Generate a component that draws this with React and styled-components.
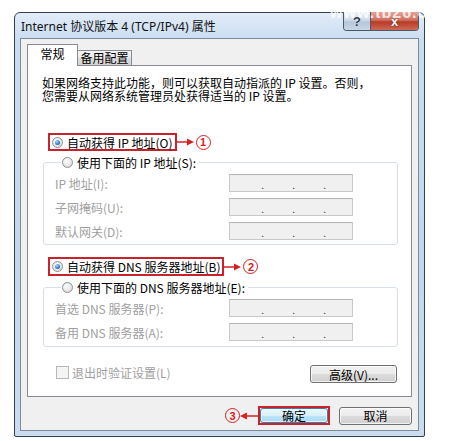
import React from "react";
import styled, { createGlobalStyle } from "styled-components";

const GlobalStyle = createGlobalStyle`
  body {
    margin: 0;
    background: #fff;
    font-family: "Noto Sans CJK SC", "Noto Sans", sans-serif;
    color: #000;
  }
`;

const Page = styled.div`
  position: relative;
  width: 450px;
  height: 441px;
  padding: 12px 0 0 14px;
  box-sizing: border-box;
  overflow: hidden;
`;

const Watermark = styled.div`
  position: absolute;
  top: 4px;
  left: 330px;
  font: bold 16px "Liberation Sans", sans-serif;
  letter-spacing: 1px;
  color: rgba(255, 255, 255, 0.8);
`;

const Window = styled.div`
  width: 411px;
  height: 425px;
  box-sizing: border-box;
  border: 1px solid #34404e;
  border-radius: 6px 6px 2px 2px;
  background: linear-gradient(#e2ecf8, #c9dcf1 28px, #c2d7ee 60%, #cbdcf0);
  display: flex;
  flex-direction: column;
  padding: 0 5px 5px;
`;

const TitleBar = styled.div`
  height: 25px;
  display: flex;
  align-items: center;
`;

const Title = styled.div`
  flex: 1;
  margin-left: 1px;
  font-family: "Noto Sans", "Noto Sans CJK SC", sans-serif;
  font-size: 12px;
  color: #111;
`;

const CaptionButtons = styled.div`
  align-self: flex-start;
  margin-top: -1px;
  display: flex;
  height: 18px;
  border: 1px solid #4a5868;
  border-top: none;
  border-radius: 0 0 4px 4px;
  overflow: hidden;
`;

const CaptionButton = styled.div`
  width: ${(p) => p.$w}px;
  display: flex;
  align-items: center;
  justify-content: center;
  font: bold 13px "Liberation Sans", sans-serif;
  color: ${(p) => (p.$close ? "#fff" : "#2b3948")};
  background: ${(p) =>
    p.$close
      ? "linear-gradient(#e6a497, #d0705f 45%, #b83a25 55%, #cc6a55)"
      : "linear-gradient(#e9f0f8, #cfdbe8 45%, #b6c7da 55%, #c8d6e6)"};
  border-right: ${(p) => (p.$close ? "none" : "1px solid #4a5868")};
  text-shadow: ${(p) => (p.$close ? "0 0 2px #6b1a10" : "0 0 1px #fff")};
`;

const Client = styled.div`
  flex: 1;
  border: 1px solid #7d8a98;
  background: #f0f0f0;
  padding: 5px 6px 0;
  display: flex;
  flex-direction: column;
`;

const TabStrip = styled.div`
  display: flex;
  align-items: flex-end;
  height: 22px;
  margin-bottom: -1px;
  position: relative;
  z-index: 1;
`;

const Tab = styled.div`
  box-sizing: border-box;
  width: ${(p) => p.$w}px;
  height: ${(p) => (p.$active ? 22 : 16)}px;
  border: 1px solid #898c95;
  border-bottom: ${(p) => (p.$active ? "none" : "1px solid #898c95")};
  border-left: ${(p) => (p.$active ? "1px solid #898c95" : "none")};
  background: ${(p) => (p.$active ? "#fff" : "linear-gradient(#f3f3f3, #ebebeb 50%, #dcdcdc 50%, #d4d4d4)")};
  font-size: 12px;
  line-height: 1;
  display: flex;
  align-items: center;
  justify-content: center;
  padding-bottom: ${(p) => (p.$active ? 3 : 0)}px;
`;

const Panel = styled.div`
  box-sizing: border-box;
  height: 332px;
  background: #fff;
  border: 1px solid #898c95;
  padding: 10px 13px 0 14px;
  display: flex;
  flex-direction: column;
`;

const Description = styled.p`
  margin: 0;
  font-size: 12px;
  line-height: 13px;
`;

const CalloutRow = styled.div`
  display: flex;
  align-items: center;
  margin-top: ${(p) => p.$mt}px;
  margin-left: 6px;
`;

const RedBox = styled.div`
  display: flex;
  align-items: center;
  height: ${(p) => p.$h || 18}px;
  box-sizing: border-box;
  border: 2px solid #c8232a;
  padding: 0 2px;
`;

const Radio = styled.span`
  width: 11px;
  height: 11px;
  box-sizing: border-box;
  border-radius: 50%;
  border: 1px solid #8e8f8f;
  background: radial-gradient(circle at 40% 35%, #fff, #dcdcdc 80%);
  display: flex;
  align-items: center;
  justify-content: center;
  flex: none;

  &::after {
    content: "";
    display: ${(p) => (p.$checked ? "block" : "none")};
    width: 5px;
    height: 5px;
    border-radius: 50%;
    background: radial-gradient(circle at 35% 30%, #9fdcff, #1e6fb8 70%, #134d88);
  }
`;

const OptionText = styled.span`
  font-size: 12px;
  margin-left: 4px;
  white-space: nowrap;
  color: ${(p) => (p.$disabled ? "#a0a0a0" : "#000")};
`;

const Group = styled.fieldset`
  margin: ${(p) => p.$mt}px 0 0 1px;
  padding: 0 0 ${(p) => p.$pb}px 11px;
  border: 1px solid #d5dfe5;
  border-radius: 3px;
  min-width: 0;
`;

const Legend = styled.legend`
  margin-left: 6px;
  padding: 0 3px 0 1px;
  height: 18px;
  display: flex;
  align-items: center;
`;

const FieldRow = styled.div`
  display: grid;
  grid-template-columns: 174px 124px;
  align-items: center;
  height: 24px;
`;

const FieldLabel = styled.span`
  font-size: 12px;
  color: #a0a0a0;
  white-space: nowrap;
`;

const IpBox = styled.div`
  box-sizing: border-box;
  height: 18px;
  padding-left: 3px;
  border: 1px solid #c9c9c9;
  border-top-color: #b5b5b5;
  background: #f0f0f0;
  display: grid;
  grid-template-columns: repeat(3, 31px);
  font-size: 10px;
  line-height: 1;
  color: #333;
`;

const IpDot = styled.span`
  text-align: right;
  padding-top: 5px;
`;

const BottomRow = styled.div`
  display: flex;
  align-items: flex-start;
  justify-content: space-between;
  margin-top: 18px;
  margin-right: 1px;
`;

const CheckLabel = styled.label`
  display: flex;
  align-items: center;
  margin-left: 14px;
  height: 14px;
  font-size: 12px;
  color: #a0a0a0;
`;

const CheckBox = styled.span`
  width: 13px;
  height: 13px;
  box-sizing: border-box;
  border: 1px solid #b8b8b8;
  background: #f4f4f4;
  margin-right: 3px;
`;

const Button = styled.div`
  box-sizing: border-box;
  width: ${(p) => p.$w}px;
  height: ${(p) => p.$h || 18}px;
  border: 1px solid ${(p) => (p.$default ? "#3c7fb1" : "#707070")};
  border-radius: 3px;
  background: ${(p) =>
    p.$default
      ? "linear-gradient(#eaf6fd, #d9f0fc 50%, #bee6fd 50%, #a7d9f5)"
      : "linear-gradient(#f2f2f2, #ebebeb 50%, #dddddd 50%, #cfcfcf)"};
  box-shadow: inset 0 0 0 1px rgba(255, 255, 255, 0.7);
  font-size: 12px;
  display: flex;
  align-items: center;
  justify-content: center;
`;

const Footer = styled.div`
  display: flex;
  align-items: center;
  justify-content: flex-end;
  margin-top: 9px;
  height: 19px;
`;

const FocusRing = styled.div`
  border: 2px solid #c8232a;
  display: flex;
  margin-right: 9px;
`;

const Marker = styled.span`
  width: 15px;
  height: 15px;
  box-sizing: border-box;
  border: 1.5px solid #d42222;
  border-radius: 50%;
  color: #d42222;
  font: bold 11px "Liberation Sans", sans-serif;
  display: flex;
  align-items: center;
  justify-content: center;
  flex: none;
  margin-left: ${(p) => p.$ml || 0}px;
`;

const Arrow = ({ left, width = 17 }) => (
  <svg width={width} height="8" viewBox={`0 0 ${width} 8`} style={{ flex: "none" }}>
    {left ? (
      <>
        <line x1="6" y1="4" x2={width} y2="4" stroke="#d42222" strokeWidth="1.5" />
        <polygon points="0,4 7,0.5 7,7.5" fill="#d42222" />
      </>
    ) : (
      <>
        <line x1="0" y1="4" x2={width - 6} y2="4" stroke="#d42222" strokeWidth="1.5" />
        <polygon points={`${width},4 ${width - 7},0.5 ${width - 7},7.5`} fill="#d42222" />
      </>
    )}
  </svg>
);

const IpField = () => (
  <IpBox>
    <IpDot>.</IpDot>
    <IpDot>.</IpDot>
    <IpDot>.</IpDot>
  </IpBox>
);

const ipRows = ["IP 地址(I):", "子网掩码(U):", "默认网关(D):"];
const dnsRows = ["首选 DNS 服务器(P):", "备用 DNS 服务器(A):"];

export default function App() {
  return (
    <Page>
      <GlobalStyle />
      <Window>
        <TitleBar>
          <Title>Internet 协议版本 4 (TCP/IPv4) 属性</Title>
          <CaptionButtons>
            <CaptionButton $w={26}>?</CaptionButton>
            <CaptionButton $w={47} $close>
              x
            </CaptionButton>
          </CaptionButtons>
        </TitleBar>
        <Client>
          <TabStrip>
            <Tab $w={51} $active>
              常规
            </Tab>
            <Tab $w={54}>备用配置</Tab>
          </TabStrip>
          <Panel>
            <Description>
              如果网络支持此功能，则可以获取自动指派的 IP 设置。否则，
              <br />
              您需要从网络系统管理员处获得适当的 IP 设置。
            </Description>

            <CalloutRow $mt={31}>
              <RedBox>
                <Radio $checked />
                <OptionText>自动获得 IP 地址(O)</OptionText>
              </RedBox>
              <Arrow />
              <Marker $ml={2}>1</Marker>
            </CalloutRow>

            <Group $mt={2} $pb={1}>
              <Legend>
                <Radio />
                <OptionText>使用下面的 IP 地址(S):</OptionText>
              </Legend>
              {ipRows.map((label) => (
                <FieldRow key={label}>
                  <FieldLabel>{label}</FieldLabel>
                  <IpField />
                </FieldRow>
              ))}
            </Group>

            <CalloutRow $mt={12}>
              <RedBox $h={19}>
                <Radio $checked />
                <OptionText>自动获得 DNS 服务器地址(B)</OptionText>
              </RedBox>
              <Arrow />
              <Marker $ml={2}>2</Marker>
            </CalloutRow>

            <Group $mt={2} $pb={2}>
              <Legend>
                <Radio />
                <OptionText>使用下面的 DNS 服务器地址(E):</OptionText>
              </Legend>
              {dnsRows.map((label) => (
                <FieldRow key={label}>
                  <FieldLabel>{label}</FieldLabel>
                  <IpField />
                </FieldRow>
              ))}
            </Group>

            <BottomRow>
              <CheckLabel>
                <CheckBox />
                退出时验证设置(L)
              </CheckLabel>
              <Button $w={87}>高级(V)...</Button>
            </BottomRow>
          </Panel>
          <Footer>
            <Marker>3</Marker>
            <Arrow left width={18} />
            <FocusRing>
              <Button $w={68} $h={15} $default>
                确定
              </Button>
            </FocusRing>
            <Button $w={73}>取消</Button>
          </Footer>
        </Client>
      </Window>
      <Watermark>www.tb26.c</Watermark>
    </Page>
  );
}
